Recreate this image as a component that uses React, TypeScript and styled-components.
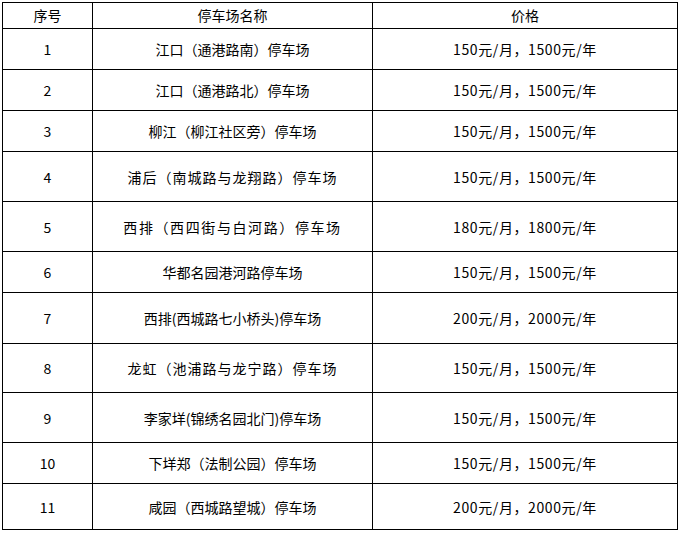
import React from 'react';
import styled, { createGlobalStyle } from 'styled-components';

interface ParkingLot {
  no: string;
  name: string;
  price: string;
  height: number;
  spread?: number;
}

const lots: ParkingLot[] = [
  { no: '1', name: '江口（通港路南）停车场', price: '150元/月，1500元/年', height: 41 },
  { no: '2', name: '江口（通港路北）停车场', price: '150元/月，1500元/年', height: 41 },
  { no: '3', name: '柳江（柳江社区旁）停车场', price: '150元/月，1500元/年', height: 41 },
  { no: '4', name: '浦后（南城路与龙翔路）停车场', price: '150元/月，1500元/年', height: 50, spread: 1 },
  { no: '5', name: '西排（西四街与白河路）停车场', price: '180元/月，1800元/年', height: 50, spread: 1.6 },
  { no: '6', name: '华都名园港河路停车场', price: '150元/月，1500元/年', height: 41 },
  { no: '7', name: '西排(西城路七小桥头)停车场', price: '200元/月，2000元/年', height: 51 },
  { no: '8', name: '龙虹（池浦路与龙宁路）停车场', price: '150元/月，1500元/年', height: 49, spread: 1 },
  { no: '9', name: '李家垟(锦绣名园北门)停车场', price: '150元/月，1500元/年', height: 50 },
  { no: '10', name: '下垟郑（法制公园）停车场', price: '150元/月，1500元/年', height: 41 },
  { no: '11', name: '咸园（西城路望城）停车场', price: '200元/月，2000元/年', height: 46 },
];

const GlobalStyle = createGlobalStyle`
  html, body {
    margin: 0;
    padding: 0;
    background: #ffffff;
  }
  body {
    font-family: SimSun, "Noto Sans CJK SC", "DejaVu Sans", sans-serif;
    font-size: 14px;
    color: #000000;
  }
`;

const Page = styled.div`
  padding: 2px;
`;

const Table = styled.div`
  width: 676px;
  border-top: 1px solid #000;
  border-left: 1px solid #000;
  box-sizing: border-box;
`;

const Row = styled.div<{ h: number }>`
  display: grid;
  grid-template-columns: 90px 280px 305px;
  height: ${({ h }) => h}px;
`;

const Cell = styled.div<{ spread?: number }>`
  display: flex;
  align-items: center;
  justify-content: center;
  border-right: 1px solid #000;
  border-bottom: 1px solid #000;
  white-space: nowrap;
  line-height: 16px;
  letter-spacing: ${({ spread }) => spread ?? 0}px;
`;

const HeaderCell = styled(Cell)`
  padding-bottom: 2px;
`;

const App: React.FC = () => (
  <Page>
    <GlobalStyle />
    <Table>
      <Row h={26}>
        <HeaderCell>序号</HeaderCell>
        <HeaderCell>停车场名称</HeaderCell>
        <HeaderCell>价格</HeaderCell>
      </Row>
      {lots.map(({ no, name, price, height, spread }) => (
        <Row key={no} h={height}>
          <Cell>{no}</Cell>
          <Cell spread={spread}>{name}</Cell>
          <Cell spread={0.6}>{price}</Cell>
        </Row>
      ))}
    </Table>
  </Page>
);

export default App;
